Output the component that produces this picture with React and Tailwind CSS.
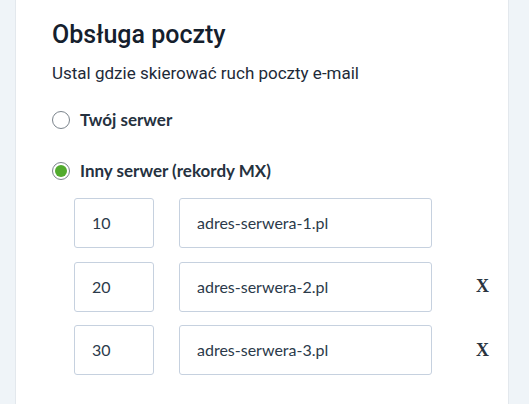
export default function App() {
  const rows = [
    { p: "10", h: "adres-serwera-1.pl", x: false },
    { p: "20", h: "adres-serwera-2.pl", x: true },
    { p: "30", h: "adres-serwera-3.pl", x: true },
  ];
  return (
    <div className="w-[529px] h-[404px] bg-[#eff4f8] overflow-hidden" style={{ fontFamily: "Lato, 'Noto Sans', sans-serif" }}>
      <div className="ml-[15px] w-[494px] h-full bg-white border-x border-[#e3e8ed] pl-[36px] pt-[19px]">
        <h1 className="text-[25px] leading-[32px] font-medium text-[#15202d]" style={{ fontFamily: "Roboto, sans-serif" }}>Obsługa poczty</h1>
        <p className="mt-[10px] text-[17px] leading-[24px] text-[#1e2a38]" style={{ fontFamily: "Roboto, sans-serif" }}>Ustal gdzie skierować ruch poczty e-mail</p>
        <label className="mt-[23px] flex items-center h-[24px] gap-[10px]">
          <span className="w-[18px] h-[18px] rounded-full border-[1.5px] border-[#7b848c] bg-white" />
          <span className="text-[17px] font-bold text-[#26323f]">Twój serwer</span>
        </label>
        <label className="mt-[27px] flex items-center h-[24px] gap-[10px]">
          <span className="w-[18px] h-[18px] rounded-full border-[1.5px] border-[#7b848c] bg-white flex items-center justify-center">
            <span className="w-[12px] h-[12px] rounded-full bg-[#52ab2e]" />
          </span>
          <span className="text-[17px] font-bold text-[#26323f]">Inny serwer (rekordy MX)</span>
        </label>
        <div className="mt-[15px] ml-[22px] flex flex-col gap-[13.5px]">
          {rows.map((r) => (
            <div key={r.p} className="flex items-center h-[50px]">
              <div className="w-[80px] h-[50px] border border-[#c6d1df] rounded-[3px] flex items-center pl-[17px] text-[16px] text-[#2b3a4a]">{r.p}</div>
              <div className="ml-[25px] w-[253px] h-[50px] border border-[#c6d1df] rounded-[3px] flex items-center pl-[17px] text-[16px] text-[#2b3a4a]">{r.h}</div>
              {r.x && (
                <span className="ml-[44px] text-[18px] font-bold text-[#2a3440]" style={{ fontFamily: "'Liberation Serif', serif" }}>X</span>
              )}
            </div>
          ))}
        </div>
      </div>
    </div>
  );
}
